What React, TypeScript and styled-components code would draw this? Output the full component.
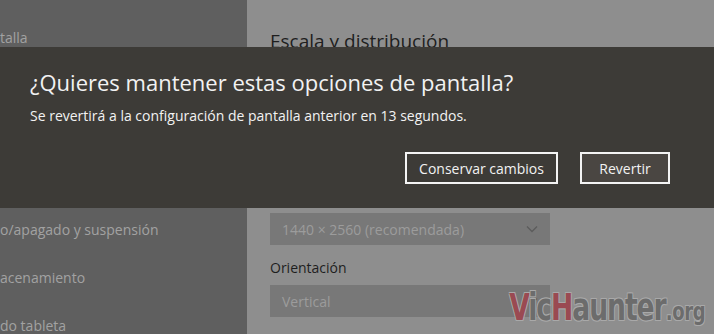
import React from 'react'
import styled, { createGlobalStyle } from 'styled-components'

const Global = createGlobalStyle`
  html, body {
    margin: 0;
    padding: 0;
    width: 714px;
    height: 334px;
    overflow: hidden;
    background: #8e8e8e;
    font-family: "Open Sans", "Noto Sans", sans-serif;
  }
`

const Screen = styled.div`
  position: relative;
  width: 714px;
  height: 334px;
  overflow: hidden;
  display: flex;
`

const Sidebar = styled.div`
  width: 247px;
  flex-shrink: 0;
  background: #5f5f5f;
  display: flex;
  flex-direction: column;
  padding-top: 26px;
`

const NavItem = styled.div<{ $hidden?: boolean }>`
  height: 48px;
  flex-shrink: 0;
  line-height: 24px;
  font-size: 14px;
  color: #a2a2a2;
  white-space: nowrap;
  visibility: ${p => (p.$hidden ? 'hidden' : 'visible')};
`

const Content = styled.div`
  flex: 1;
  padding: 28px 0 0 23px;
  display: flex;
  flex-direction: column;
  & > * {
    flex-shrink: 0;
  }
`

const Heading = styled.div`
  font-size: 19px;
  line-height: 26px;
  color: #1e1e1e;
  margin-bottom: 159px;
`

const Select = styled.div`
  width: 280px;
  height: 32px;
  box-sizing: border-box;
  background: #787878;
  display: flex;
  align-items: center;
  justify-content: space-between;
  padding: 0 12px;
  font-size: 14px;
  color: #9c9c9c;
`

const Label = styled.div`
  font-size: 14px;
  color: #1e1e1e;
  margin: 13px 0 7px;
  line-height: 20px;
`

const Dialog = styled.div`
  position: absolute;
  left: 0;
  top: 47px;
  width: 714px;
  height: 161px;
  background: #3d3b37;
  box-sizing: border-box;
  padding: 20px 44px 0 30px;
  display: flex;
  flex-direction: column;
`

const Title = styled.div`
  font-size: 22px;
  line-height: 30px;
  color: #f2f2f2;
`

const Message = styled.div`
  font-size: 14px;
  line-height: 20px;
  color: #f2f2f2;
  margin-top: 9px;
`

const Actions = styled.div`
  display: flex;
  justify-content: flex-end;
  gap: 22px;
  margin-top: 26px;
`

const Button = styled.div<{ $w: number; $hover?: boolean }>`
  width: ${p => p.$w}px;
  height: 32px;
  box-sizing: border-box;
  border: 2px solid #f4f4f4;
  background: ${p => (p.$hover ? '#4a4642' : 'transparent')};
  color: #f2f2f2;
  font-size: 14px;
  display: flex;
  align-items: center;
  justify-content: center;
`

const Watermark = styled.div`
  position: absolute;
  right: 9px;
  bottom: 2px;
  font-family: "DejaVu Sans", sans-serif;
  font-weight: bold;
  font-size: 37px;
  line-height: 40px;
  letter-spacing: -1.5px;
  color: #6c6c6c;
  transform: scaleX(0.72);
  transform-origin: right bottom;
  white-space: nowrap;
  text-shadow: -1px -1px 0 #a9a9a9, 1px -1px 0 #a9a9a9, -1px 1px 0 #a9a9a9, 1px 1px 0 #a9a9a9;
`

const Red = styled.span`
  color: #9a4a52;
`

const Small = styled.span`
  font-size: 25px;
  letter-spacing: -0.5px;
`

const Chevron = () => (
  <svg width="12" height="8" viewBox="0 0 12 8">
    <path d="M1 1.5 L6 6.5 L11 1.5" fill="none" stroke="#5c5c5c" strokeWidth="1.3" />
  </svg>
)

export default function App() {
  return (
    <>
      <Global />
      <Screen>
        <Sidebar>
          <NavItem>talla</NavItem>
          <NavItem $hidden>ciones y acciones</NavItem>
          <NavItem $hidden>ido y batería</NavItem>
          <NavItem $hidden>gía</NavItem>
          <NavItem>o/apagado y suspensión</NavItem>
          <NavItem>acenamiento</NavItem>
          <NavItem>do tableta</NavItem>
        </Sidebar>
        <Content>
          <Heading>Escala y distribución</Heading>
          <Select>
            1440 × 2560 (recomendada)
            <Chevron />
          </Select>
          <Label>Orientación</Label>
          <Select>
            Vertical
            <Chevron />
          </Select>
        </Content>
        <Dialog>
          <Title>¿Quieres mantener estas opciones de pantalla?</Title>
          <Message>Se revertirá a la configuración de pantalla anterior en 13 segundos.</Message>
          <Actions>
            <Button $w={153}>Conservar cambios</Button>
            <Button $w={90} $hover>Revertir</Button>
          </Actions>
        </Dialog>
        <Watermark>
          <Red>V</Red>ic<Red>H</Red>aunter<Small>.org</Small>
        </Watermark>
      </Screen>
    </>
  )
}
